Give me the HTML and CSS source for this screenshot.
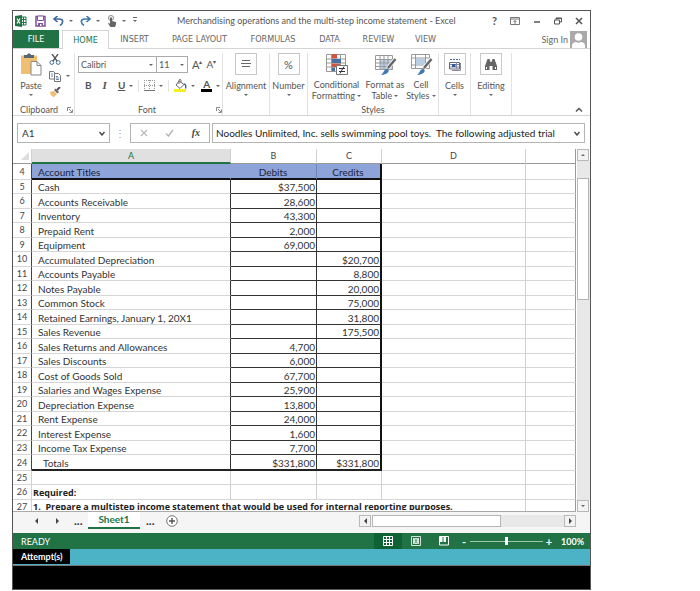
FILE: index.html
```
<!DOCTYPE html>
<html lang="en">
<head>
<meta charset="utf-8">
<title>Merchandising operations and the multi-step income statement - Excel</title>
<link rel="stylesheet" href="styles.css">
</head>
<body>
<main class="window">
  <header class="titlebar">
    <div class="quick">
      <svg class="logo" width="12" height="12" viewBox="0 0 12 12"><path d="M6 2h5v8H6z" fill="#fff" stroke="#217346"/><path d="M8.500 2v8M6 4.500h5M6 7.500h5" stroke="#217346"/><path d="M0 1l7-1v12l-7-1z" fill="#217346"/><path d="M2 3.500l3 5M5 3.500l-3 5" stroke="#fff" stroke-width="1.200"/></svg>
      <button class="ic" aria-label="Save"><svg width="11" height="12" viewBox="0 0 11 12"><path d="M1 1.500h9v9.500H1z" fill="#fff" stroke="#80509a" stroke-width="1.500"/><path d="M2.500 1h6v4.500h-6z" fill="#fff" stroke="#80509a"/><path d="M3 8h5v3H3z" fill="#80509a"/><path d="M5 9h1.500v2H5z" fill="#fff"/></svg></button>
      <button class="ic split" aria-label="Undo"><svg width="11" height="10" viewBox="0 0 11 10"><path d="M4.500 0L1 3l3.500 3M1 3h5c5 0 4.500 4 1 6.500" fill="none" stroke="#3f6a9e" stroke-width="1.600"/></svg><i class="dn"></i></button>
      <button class="ic split" aria-label="Redo"><svg width="11" height="10" viewBox="0 0 11 10"><path d="M6.500 0L10 3 6.500 6M10 3H5C0 3 .5 7 4 9.500" fill="none" stroke="#3f78ae" stroke-width="1.600"/></svg><i class="dn"></i></button>
      <button class="ic split" aria-label="Touch mode"><svg width="10" height="12" viewBox="0 0 10 12"><circle cx="4" cy="3" r="2.500" fill="none" stroke="#888"/><path d="M3 2.500h2V6l4 1v2.500L8 12H3.500L1 8.500 2 8l1 .8z" fill="#666"/></svg><i class="dn"></i></button>
      <button class="ic" aria-label="Customize toolbar"><i class="dn bar"></i></button>
    </div>
    <h1>Merchandising operations and the multi-step income statement - Excel</h1>
    <div class="wincontrols">
      <button class="ic help">?</button>
      <button class="ic" aria-label="Ribbon options"><svg width="10" height="8" viewBox="0 0 10 8"><path d="M.5.5h9v7h-9zM.5 2h9M5 7V3.500M3.500 5L5 3.500 6.500 5" fill="none" stroke="#777"/></svg></button>
      <button class="ic" aria-label="Minimize"><svg width="8" height="8" viewBox="0 0 8 8"><path d="M1 5h6" stroke="#555" stroke-width="1.500"/></svg></button>
      <button class="ic" aria-label="Restore"><svg width="8" height="8" viewBox="0 0 8 8"><path d="M.5 3h5v4h-5zM2 3V1h5.500v4H6M2 1.500h5" fill="none" stroke="#555"/></svg></button>
      <button class="ic" aria-label="Close"><svg width="8" height="8" viewBox="0 0 8 8"><path d="M1 1l6 6M7 1L1 7" stroke="#555" stroke-width="1.500"/></svg></button>
    </div>
  </header>

  <nav class="tabs">
    <button class="tab file">FILE</button>
    <button class="tab home">HOME</button>
    <button class="tab insert">INSERT</button>
    <button class="tab page">PAGE LAYOUT</button>
    <button class="tab formulas">FORMULAS</button>
    <button class="tab data">DATA</button>
    <button class="tab review">REVIEW</button>
    <button class="tab view">VIEW</button>
    <a class="signin" href="#">Sign In
      <svg width="17" height="17" viewBox="0 0 17 17"><path d="M0 0h17v17H0z" fill="#aaa"/><circle cx="8.500" cy="6" r="3.800" fill="#fff"/><path d="M2 17v-2c0-3 2-4 4-4 1.500 1 3.500 1 5 0 2 0 4 1 4 4v2z" fill="#fff"/></svg>
    </a>
  </nav>

  <section class="ribbon">
    <div class="group clipboard">
      <div class="tools">
        <button class="big"><svg width="22" height="23" viewBox="0 0 22 23"><path d="M1 2.500h16V21H1z" fill="#efbf72"/><path d="M4 2h3c0-2 4-2 4 0h3v3H4z" fill="#5a6577"/><path d="M11 8.500h6l4 4V22H11z" fill="#fff" stroke="#888"/><path d="M17 8.500v4h4" fill="none" stroke="#888"/></svg><span>Paste</span><i class="dn"></i></button>
        <div class="stack">
          <button class="ic" aria-label="Cut"><svg width="12" height="11" viewBox="0 0 12 11"><path d="M3 0l5 7M9 0L4 7" stroke="#555" stroke-width="1.300"/><circle cx="2.800" cy="8.500" r="1.900" fill="none" stroke="#3f6a9e"/><circle cx="9.200" cy="8.500" r="1.900" fill="none" stroke="#3f6a9e"/></svg></button>
          <button class="ic split" aria-label="Copy"><svg width="12" height="12" viewBox="0 0 12 12"><path d="M.5 1.500h4l2 2V9h-6z" fill="#fff" stroke="#777"/><path d="M5.500 3.500h4l2 2v6h-6z" fill="#fff" stroke="#777"/><path d="M2 4h2M2 6h2M7 6.500h2M7 8h3M7 9.500h3" stroke="#6d8db2"/></svg><i class="dn"></i></button>
          <button class="ic" aria-label="Format painter"><svg width="12" height="10" viewBox="0 0 12 10"><path d="M1 5l4-1 3 3-3 3C3 10 1 7 1 5z" fill="#efbf72"/><path d="M5 3l3.500 3.500L10 5 6.500 1.500z" fill="#666"/><path d="M8 3l3-3" stroke="#555" stroke-width="2"/></svg></button>
        </div>
      </div>
      <div class="caption"><span>Clipboard</span><svg class="launch" width="6" height="6" viewBox="0 0 6 6"><path d="M.5 4V.5H4M2 2l3 3M5.500 2.500v3h-3" fill="none" stroke="#888"/></svg></div>
    </div>

    <div class="group font">
      <div class="fontrow">
        <div class="pick face"><select aria-label="Font"><option>Calibri</option></select><i class="dn"></i></div>
        <div class="pick size"><select aria-label="Font size"><option>11</option></select><i class="dn"></i></div>
        <button class="ic grow">A<sup>▴</sup></button>
        <button class="ic shrink">A<sup>▾</sup></button>
      </div>
      <div class="fontrow marks">
        <button class="ic"><b>B</b></button>
        <button class="ic"><em>I</em></button>
        <button class="ic split"><u>U</u><i class="dn"></i></button>
        <span class="sep"></span>
        <button class="ic split" aria-label="Borders"><svg width="11" height="12" viewBox="0 0 11 12"><path d="M.5 0v10M5.500 0v10M10.500 0v10M0 .5h11M0 5.500h11" stroke="#999" stroke-dasharray="1 1"/><path d="M0 10.500h11" stroke="#777"/></svg><i class="dn"></i></button>
        <span class="sep"></span>
        <button class="ic split" aria-label="Fill color"><svg width="13" height="13" viewBox="0 0 13 13"><path d="M0 10h12v3H0z" fill="#f4ef27"/><path d="M5 2l5 3.500-4 4L2 6z" fill="#fff" stroke="#666"/><path d="M5 5V1.500c0-1.500 2-1.500 2 0V3" fill="none" stroke="#666"/><path d="M10 5c2 0 2 3 1.500 4.500" fill="none" stroke="#3f6a9e" stroke-width="1.500"/></svg><i class="dn"></i></button>
        <button class="ic split fcolor"><span>A</span><i class="dn"></i></button>
      </div>
      <div class="caption"><span class="mid">Font</span><svg class="launch" width="6" height="6" viewBox="0 0 6 6"><path d="M.5 4V.5H4M2 2l3 3M5.500 2.500v3h-3" fill="none" stroke="#888"/></svg></div>
    </div>

    <div class="group align">
      <button class="big"><span class="box"><svg width="12" height="10" viewBox="0 0 12 10"><path d="M2 1.500h8M1 4.500h10M2 7.500h8" stroke="#666"/></svg></span><span>Alignment</span><i class="dn"></i></button>
    </div>
    <div class="group number">
      <button class="big"><span class="box pct">%</span><span>Number</span><i class="dn"></i></button>
    </div>

    <div class="group styles">
      <div class="tools">
        <button class="big cond"><svg width="24" height="23" viewBox="0 0 24 23"><path d="M1.500 1.500h19v17h-19z" fill="#fff" stroke="#999"/><path d="M1 6h20M1 10h20M1 14h20M6.500 1v18M15.500 1v18" stroke="#999"/><path d="M7 1h5v4.500H7zM7 10.500h8v3.500H7z" fill="#d2553d"/><path d="M7 6h9v4H7zM7 14.500h3V18H7z" fill="#4670a8"/><path d="M11.500 12.500h11v9h-11z" fill="#fff" stroke="#777"/><path d="M14 15.500h6M14 18.500h6M19 13.500l-4 7" stroke="#333"/></svg><span>Conditional<br>Formatting <i class="dn"></i></span></button>
        <button class="big fmt"><svg width="24" height="23" viewBox="0 0 24 23"><path d="M2.500 2.500h17v14h-17z" fill="#fff" stroke="#999"/><path d="M7 6h12v10H7z" fill="#b9cde4"/><path d="M2 6.500h18M2 10h18M2 13.500h18M7 2v15M11 2v15M15 2v15" stroke="#999"/><path d="M22.500 6L15 15" stroke="#fff" stroke-width="4"/><path d="M22.500 6L15 15" stroke="#666" stroke-width="2.500"/><path d="M7 22c4 0 3-6 7-6 3 0 3 6-7 6z" fill="#3f78b5"/></svg><span>Format as<br>Table <i class="dn"></i></span></button>
        <button class="big cell"><svg width="24" height="23" viewBox="0 0 24 23"><path d="M2.500 1.500h18v14h-18z" fill="#fff" stroke="#999"/><path d="M2 5h19M2 12h19M6.500 1v15M16.500 1v15" stroke="#999"/><path d="M7 5.500h9V12H7z" fill="#b9cde4"/><path d="M22.500 6L15 15" stroke="#fff" stroke-width="4"/><path d="M22.500 6L15 15" stroke="#666" stroke-width="2.500"/><path d="M7 22c4 0 3-6 7-6 3 0 3 6-7 6z" fill="#3f78b5"/></svg><span>Cell<br>Styles <i class="dn"></i></span></button>
      </div>
      <div class="caption"><span class="mid">Styles</span></div>
    </div>

    <div class="group cells">
      <button class="big"><span class="box"><svg width="12" height="13" viewBox="0 0 12 13"><path d="M1 1.500h10" stroke="#3f6a9e" stroke-dasharray="2 1"/><path d="M.5 4.500h10V11H.5z" fill="#fff" stroke="#667"/><path d="M1 6.500h9M1 9h9M7.500 4v7" stroke="#88a"/><path d="M3 6h3.500v3H3z" fill="#2f5f96"/><path d="M3 12.500h8.500V5" fill="none" stroke="#889"/></svg></span><span>Cells</span><i class="dn"></i></button>
    </div>
    <div class="group editing">
      <button class="big"><span class="box"><svg width="12" height="11" viewBox="0 0 12 11"><path d="M2.500 0h2l1 3h1l1-3h2L12 7v4H7.500V7h-3v4H0V7z" fill="#666"/><path d="M1.500 8v2M10.500 8v2" stroke="#fff"/></svg></span><span>Editing</span><i class="dn"></i></button>
    </div>
    <button class="ic collapse" aria-label="Collapse ribbon"><svg width="8" height="6" viewBox="0 0 8 6"><path d="M1 4.500L4 1.500l3 3" fill="none" stroke="#555" stroke-width="1.500"/></svg></button>
  </section>

  <section class="formula">
    <div class="namebox"><input aria-label="Name box" value="A1"><button class="ic" aria-label="Names"><svg width="6" height="5" viewBox="0 0 6 5"><path d="M.5 1L3 4l2.500-3" fill="none" stroke="#444" stroke-width="1.400"/></svg></button></div>
    <span class="grip">⋮</span>
    <div class="fx">
      <button class="ic" aria-label="Cancel"><svg width="8" height="8" viewBox="0 0 8 8"><path d="M1 1l6 6M7 1L1 7" stroke="#bbb" stroke-width="1.300"/></svg></button>
      <button class="ic" aria-label="Enter"><svg width="9" height="8" viewBox="0 0 9 8"><path d="M1 4.500L3.500 7 8 1" fill="none" stroke="#bbb" stroke-width="1.600"/></svg></button>
      <button class="ic fn">fx</button>
    </div>
    <div class="content"><input aria-label="Formula" value="Noodles Unlimited, Inc. sells swimming pool toys.  The following adjusted trial"><button class="ic" aria-label="Expand"><svg width="6" height="5" viewBox="0 0 6 5"><path d="M.5 1L3 4l2.500-3" fill="none" stroke="#444" stroke-width="1.400"/></svg></button></div>
  </section>

  <section class="sheet">
    <table>
      <colgroup><col class="c0"><col class="ca"><col class="cb"><col class="cc"><col class="cd"><col></colgroup>
      <thead><tr><th class="corner"><svg width="8" height="8" viewBox="0 0 8 8"><path d="M8 0v8H0z" fill="#ddd"/></svg></th><th class="on">A</th><th>B</th><th>C</th><th>D</th><th></th></tr></thead>
      <tbody>
        <tr class="head"><th>4</th><td>Account Titles</td><td>Debits</td><td>Credits</td><td></td><td></td></tr>
        <tr class="acct"><th>5</th><td>Cash</td><td>$37,500</td><td></td><td></td><td></td></tr>
        <tr class="acct"><th>6</th><td>Accounts Receivable</td><td>28,600</td><td></td><td></td><td></td></tr>
        <tr class="acct"><th>7</th><td>Inventory</td><td>43,300</td><td></td><td></td><td></td></tr>
        <tr class="acct"><th>8</th><td>Prepaid Rent</td><td>2,000</td><td></td><td></td><td></td></tr>
        <tr class="acct"><th>9</th><td>Equipment</td><td>69,000</td><td></td><td></td><td></td></tr>
        <tr class="acct"><th>10</th><td>Accumulated Depreciation</td><td></td><td>$20,700</td><td></td><td></td></tr>
        <tr class="acct"><th>11</th><td>Accounts Payable</td><td></td><td>8,800</td><td></td><td></td></tr>
        <tr class="acct"><th>12</th><td>Notes Payable</td><td></td><td>20,000</td><td></td><td></td></tr>
        <tr class="acct"><th>13</th><td>Common Stock</td><td></td><td>75,000</td><td></td><td></td></tr>
        <tr class="acct"><th>14</th><td>Retained Earnings, January 1, 20X1</td><td></td><td>31,800</td><td></td><td></td></tr>
        <tr class="acct"><th>15</th><td>Sales Revenue</td><td></td><td>175,500</td><td></td><td></td></tr>
        <tr class="acct"><th>16</th><td>Sales Returns and Allowances</td><td>4,700</td><td></td><td></td><td></td></tr>
        <tr class="acct"><th>17</th><td>Sales Discounts</td><td>6,000</td><td></td><td></td><td></td></tr>
        <tr class="acct"><th>18</th><td>Cost of Goods Sold</td><td>67,700</td><td></td><td></td><td></td></tr>
        <tr class="acct"><th>19</th><td>Salaries and Wages Expense</td><td>25,900</td><td></td><td></td><td></td></tr>
        <tr class="acct"><th>20</th><td>Depreciation Expense</td><td>13,800</td><td></td><td></td><td></td></tr>
        <tr class="acct"><th>21</th><td>Rent Expense</td><td>24,000</td><td></td><td></td><td></td></tr>
        <tr class="acct"><th>22</th><td>Interest Expense</td><td>1,600</td><td></td><td></td><td></td></tr>
        <tr class="acct"><th>23</th><td>Income Tax Expense</td><td>7,700</td><td></td><td></td><td></td></tr>
        <tr class="acct total"><th>24</th><td>Totals</td><td>$331,800</td><td>$331,800</td><td></td><td></td></tr>
        <tr><th>25</th><td></td><td></td><td></td><td></td><td></td></tr>
        <tr class="note"><th>26</th><td>Required:</td><td></td><td></td><td></td><td></td></tr>
        <tr class="note cut"><th><div>27</div></th><td colspan="4"><div>1.&nbsp; Prepare a multistep income statement that would be used for internal reporting purposes.</div></td><td></td></tr>
      </tbody>
    </table>
    <div class="vscroll">
      <button class="ic" aria-label="Scroll up"><i class="up"></i></button>
      <div class="track"><div class="thumb"></div></div>
      <button class="ic" aria-label="Scroll down"><i class="dn"></i></button>
    </div>
  </section>

  <footer>
    <div class="sheets">
      <div class="leaf">
        <button class="ic" aria-label="Previous sheet"><i class="lt"></i></button>
        <button class="ic" aria-label="Next sheet"><i class="rt"></i></button>
        <span class="dots">...</span>
        <button class="sheettab">Sheet1</button>
        <span class="dots">...</span>
        <button class="ic" aria-label="New sheet"><svg width="12" height="12" viewBox="0 0 12 12"><circle cx="6" cy="6" r="5.300" fill="#fff" stroke="#777"/><path d="M6 3v6M3 6h6" stroke="#555" stroke-width="1.400"/></svg></button>
      </div>
      <div class="hscroll">
        <button class="ic" aria-label="Scroll left"><i class="lt"></i></button>
        <div class="track"><div class="thumb"></div></div>
        <button class="ic" aria-label="Scroll right"><i class="rt"></i></button>
      </div>
    </div>
    <div class="status">
      <span class="ready">READY</span>
      <button class="ic mode on" aria-label="Normal view"><svg width="10" height="10" viewBox="0 0 10 10"><path d="M.5.5h9v9h-9zM3.500 0v10M6.500 0v10M0 3.500h10M0 6.500h10" fill="none" stroke="#fff"/></svg></button>
      <button class="ic mode" aria-label="Page layout view"><svg width="10" height="10" viewBox="0 0 10 10"><path d="M.5.5h9v9h-9zM2.500 2v6M7.500 2v6" fill="none" stroke="#d5e8dc"/><path d="M3.500 2.500h3v5h-3z" fill="#7fae92" stroke="#d5e8dc"/></svg></button>
      <button class="ic mode" aria-label="Page break view"><svg width="10" height="10" viewBox="0 0 10 10"><path d="M.5.5h9v8.500h-9z" fill="none" stroke="#fff"/><path d="M1 1h2.500v5H1zM4.500 1H7v5H4.500z" fill="#fff"/></svg></button>
      <div class="zoom"><button class="ic">-</button><input type="range" aria-label="Zoom" min="0" max="100" value="50"><button class="ic">+</button></div>
      <span class="pctv">100%</span>
    </div>
    <div class="attempts"><span>Attempt(s)</span></div>
    <div class="void"></div>
  </footer>
</main>
</body>
</html>
```
FILE: styles.css
```
* { box-sizing: border-box; }
body {
  margin: 0;
  padding: 10px 109px 0 12px;
  background: #fff;
  color: #333;
  font: 9px/11px Lato, "Liberation Sans", sans-serif;
}
button, input, select { font: inherit; color: inherit; background: none; border: 0; margin: 0; padding: 0; border-radius: 0; }
svg { display: block; flex: none; }
i.dn, i.up, i.lt, i.rt { display: inline-block; flex: none; border: 2px solid transparent; }
i.dn { border-top-color: #666; border-bottom-width: 0; }
i.up { border-bottom-color: #666; border-top-width: 0; }
i.lt { border: 3px solid transparent; border-right-color: #444; border-left-width: 0; }
i.rt { border: 3px solid transparent; border-left-color: #444; border-right-width: 0; }
.ic { display: flex; align-items: center; justify-content: center; }
.split { gap: 5px; }
.window { border: 1px solid #555; background: #fff; }

.titlebar { display: flex; align-items: center; height: 19px; }
.quick { display: flex; align-items: center; gap: 7px; width: 164px; padding-left: 2px; }
.quick .logo { margin-right: 1px; }
.bar { border-top-color: #666; position: relative; }
.bar::before { content: ""; position: absolute; left: -2px; top: -5px; width: 4px; height: 1px; background: #666; }
.titlebar h1 { flex: 1; margin: 0; font-size: 9px; font-weight: 400; color: #555; white-space: nowrap; }
.wincontrols { display: flex; align-items: center; gap: 13px; padding-right: 7px; }
.help { font-weight: 700; font-size: 11px; color: #555; }

.tabs { display: flex; height: 19px; border-bottom: 1px solid #d4d4d4; font: 9px/11px "DejaVu Sans Condensed", "DejaVu Sans", sans-serif; color: #666; }
.tab { white-space: nowrap; }
.file { width: 46px; background: #217346; color: #fff; }
.home { width: 47px; margin: 0 0 -1px 3px; background: #fff; border: 1px solid #d4d4d4; border-bottom: 0; color: #217346; }
.insert { width: 51px; }
.page { width: 79px; }
.formulas { width: 68px; }
.data { width: 45px; }
.review { width: 53px; }
.view { width: 41px; }
.signin { display: flex; flex: 1; align-items: center; justify-content: flex-end; gap: 2px; padding-right: 3px; font-family: Lato, sans-serif; color: #666; text-decoration: none; white-space: nowrap; }

.ribbon { display: flex; height: 67px; border-bottom: 1px solid #d4d4d4; color: #555; }
.group { display: flex; flex-direction: column; justify-content: space-between; margin-top: 4px; border-right: 1px solid #e2e2e2; }
.tools { display: flex; }
.big { display: flex; flex-direction: column; align-items: center; text-align: center; white-space: nowrap; }
.big > span { margin-top: 4px; }
.big > i.dn { margin-top: 3px; }
.big > .box { display: flex; align-items: center; justify-content: center; width: 22px; height: 22px; margin: 0; border: 1px solid #c8c8c8; }
.big > .box + span { margin-top: 5px; }
.big span i.dn { vertical-align: 2px; }
.pct { font-size: 11px; }
.caption { display: flex; align-items: center; justify-content: space-between; }
.mid { flex: 1; text-align: center; }
.clipboard { width: 62px; }
.clipboard .caption { padding: 0 1px 0 7px; }
.clipboard .tools { gap: 7px; padding-left: 7px; }
.stack { display: flex; flex-direction: column; align-items: flex-start; gap: 5px; padding-top: 1px; }
.font { width: 148px; padding-left: 3px; }
.font .caption { margin-top: auto; }
.fontrow { display: flex; align-items: center; padding-top: 3px; }
.pick { display: flex; align-items: center; height: 17px; padding: 0 3px 0 2px; border: 1px solid #ababab; }
.pick select { flex: 1; width: 20px; appearance: none; }
.face { width: 79px; }
.size { width: 31px; border-left: 0; }
.grow, .shrink { margin-left: 4px; font-size: 11px; }
.grow sup, .shrink sup { font-size: 6px; line-height: 6px; align-self: flex-start; }
.shrink { font-size: 10px; }
.marks { gap: 6px; padding: 6px 0 0 7px; font-size: 10px; }
.marks .split { gap: 4px; }
.marks b, .marks u { font-weight: 700; }
.marks em { font-family: "Liberation Serif", serif; font-weight: 700; padding: 0 5px; font-size: 11px; }
.sep { width: 1px; height: 12px; background: #e2e2e2; }
.marks .sep { margin: 0 -1px; }
.fcolor span { padding: 0 2px; border-bottom: 3px solid #000; font-weight: 700; line-height: 10px; }
.align { width: 47px; }
.number { width: 38px; }
.styles { width: 131px; }
.styles .big > span { margin-top: 3px; }
.cond { width: 57px; }
.fmt { width: 40px; }
.cell { width: 32px; }
.cells { width: 32px; }
.editing { width: 41px; }
.collapse { margin: auto 7px 2px auto; }

.formula { display: flex; align-items: center; padding: 7px 5px 6px 4px; font-size: 10px; }
.namebox, .fx, .content { display: flex; align-items: center; height: 20px; border: 1px solid #b5b5b5; }
.namebox { width: 93px; padding: 0 4px; }
.namebox input, .content input { flex: 1; min-width: 0; }
.grip { width: 20px; text-align: center; color: #999; }
.fx { width: 80px; justify-content: space-between; padding: 0 9px; }
.fn { font: italic 700 10px/12px "Liberation Serif", serif; color: #444; }
.content { flex: 1; margin-left: 2px; padding: 0 4px 0 3px; color: #222; }

.sheet { display: flex; }
table { flex: 1; width: 0; table-layout: fixed; border-collapse: separate; border-spacing: 0; font-size: 10px; line-height: 12px; border-bottom: 1px solid #aaa; }
.c0 { width: 19px; }
.ca { width: 199px; }
.cb { width: 86px; }
.cc { width: 65px; }
.cd { width: 144px; }
th, td { padding: 0; height: 15px; border-right: 1px solid #d0d0d0; border-bottom: 1px solid #d6d6d6; white-space: nowrap; overflow: hidden; }
th { font-weight: 400; text-align: center; font-size: 9px; color: #444; }
thead th { border-bottom-color: #999; }
thead .on { background: #e0e0e0; border-bottom: 2px solid #217346; color: #217346; }
.corner svg { margin-left: 8px; }
tr > :last-child { border-right-color: #999; }
td { text-align: right; padding: 1px 1px 0 0; }
tbody td:nth-child(2) { text-align: left; padding-left: 6px; }
tbody tr:nth-child(even) > * { height: 14px; }
.head td:nth-child(-n+4) { background: #8ea4d8; border-bottom: 2px solid #111; color: #1a2340; text-align: center; }
tbody .head > * { height: 16px; }
.head th, .acct th { border-right-color: #444; }
.acct td:nth-child(2) { border-right-color: #333; }
.acct td:nth-child(3) { border-right-color: #333; border-bottom-color: #333; }
.acct td:nth-child(4) { border-bottom-color: #333; }
.head td:nth-child(3) { border-right-color: #6f84b8; }
.head td:nth-child(2) { text-align: left; border-right-color: #8ea4d8; }
.head td:nth-child(4), .acct td:nth-child(4) { border-right: 2px solid #111; }
tbody .total > * { height: 16px; }
.total td:nth-child(-n+4) { border-bottom: 2px solid #222; }
tbody .total td:nth-child(2) { padding-left: 11px; }
tbody .note td:nth-child(2) { padding-left: 1px; font: 700 9px/12px "Open Sans", sans-serif; color: #222; }
tbody tr.cut:last-child > * { height: 11px; padding-top: 0; border-bottom: 0; vertical-align: top; }
.cut div { height: 10px; overflow: hidden; line-height: 14px; }
.vscroll { display: flex; flex-direction: column; width: 14px; padding-left: 1px; }
.vscroll .ic, .hscroll .ic { width: 12px; height: 12px; border: 1px solid #b8b8b8; background: #f3f3f3; }
.vscroll .track { flex: 1; background: #e8e8e8; padding-top: 17px; }
.vscroll .thumb { width: 12px; height: 38%; border: 1px solid #b5b5b5; background: #fff; }

.sheets { display: flex; height: 21px; background: #f5f5f5; }
.leaf { display: flex; flex: 1; align-items: flex-start; padding-left: 22px; }
.leaf > .ic { height: 18px; }
.leaf > .ic + .ic { margin-left: 18px; }
.leaf .ic + .dots { margin-left: 15px; }
.dots { width: 14px; line-height: 18px; font-size: 12px; font-weight: 700; }
.sheettab { width: 52px; height: 17px; margin-right: 6px; background: #fff; border-bottom: 2px solid #217346; color: #217346; font-size: 10px; font-weight: 700; }
.leaf .dots + .ic { margin-left: 6px; }
.hscroll { display: flex; width: 217px; height: 12px; margin: 3px 14px 0 0; }
.hscroll .track { flex: 1; margin-left: 1px; background: #e8e8e8; }
.hscroll .thumb { width: 67%; height: 12px; background: #fff; border: 1px solid #b5b5b5; }

.status { display: flex; align-items: center; height: 16px; background: #217346; color: #fff; }
.ready { flex: 1; padding-left: 8px; }
.mode { width: 28px; height: 16px; }
.mode.on { background: #0f6233; }
.zoom { display: flex; align-items: center; gap: 2px; margin-left: 2px; font-weight: 700; font-size: 11px; }
.zoom .ic { width: 8px; }
.zoom input { appearance: none; width: 73px; height: 10px; background: linear-gradient(#9fc5ae, #9fc5ae) center / 100% 1px no-repeat; }
.zoom input::-webkit-slider-thumb { appearance: none; width: 3px; height: 8px; background: #fff; }
.pctv { width: 37px; padding-left: 8px; font-weight: 700; }
.attempts { display: flex; height: 17px; background: #4bb3c5; border-bottom: 1px solid #777; }
.attempts span { padding: 0 7px 0 8px; line-height: 15px; height: 15px; background: #000; color: #fff; font-weight: 700; }
.void { height: 23px; background: #000; }
```
